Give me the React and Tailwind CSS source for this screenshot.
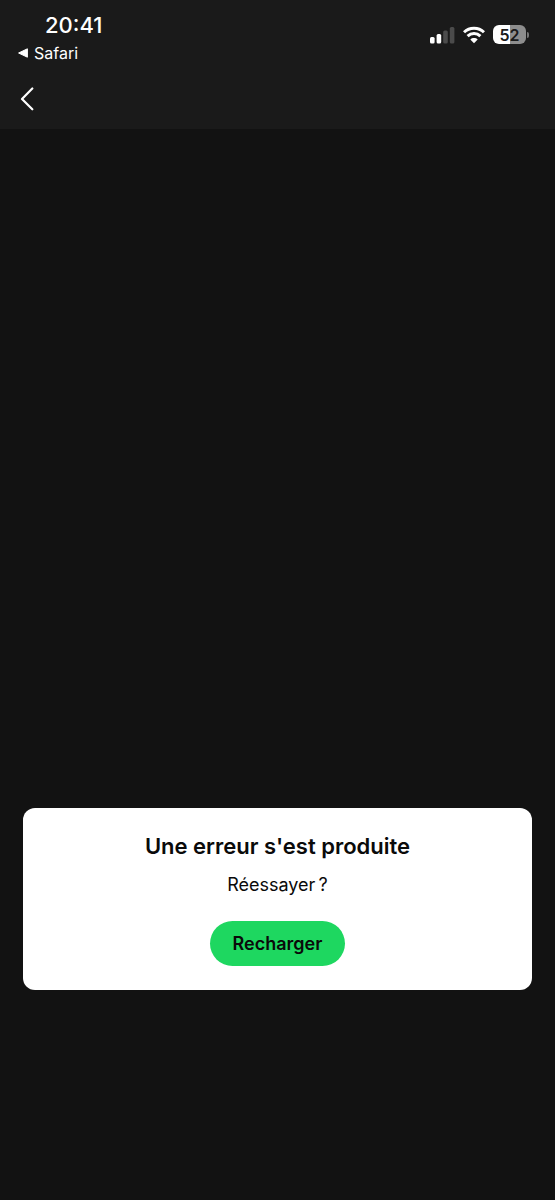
function BackArrow() {
  return (
    <svg width="14" height="24" viewBox="0 0 14 24" fill="none" stroke="#fff" strokeWidth="2.2" strokeLinecap="round" strokeLinejoin="round" aria-hidden="true">
      <path d="M12.3 1.5 2 12l10.3 10.3" />
    </svg>
  );
}

function Signal() {
  return (
    <svg width="25" height="18" viewBox="0 0 25 18" aria-hidden="true">
      <rect x="0" y="11" width="4.6" height="6.4" rx="1.5" fill="#fff" />
      <rect x="6.6" y="8" width="4.6" height="9.4" rx="1.5" fill="#fff" />
      <rect x="13.2" y="4.5" width="4.6" height="12.9" rx="1.5" fill="#4b4b4b" />
      <rect x="19.8" y="1" width="4.6" height="16.4" rx="1.5" fill="#4b4b4b" />
    </svg>
  );
}

function Wifi() {
  return (
    <svg width="22" height="18" viewBox="0 0 22 18" aria-hidden="true">
      <g fill="none" stroke="#fff" strokeWidth="3">
        <path d="M1 6.3C6.5 .9 15.5 .9 21 6.3" />
        <path d="M4.6 10.2C8.2 6.7 13.8 6.7 17.4 10.2" />
      </g>
      <path d="M7.3 13.4C9.4 11.5 12.6 11.5 14.7 13.4L11 17.2Z" fill="#fff" />
    </svg>
  );
}

function Battery() {
  return (
    <div className="flex items-center gap-px" role="img" aria-label="52 %">
      <span className="flex h-[19px] w-[33px] items-center justify-center rounded-md bg-linear-to-r from-white from-52% to-[#8d8d8d] to-52% text-base leading-none font-semibold text-[#1a1a1a]">
        52
      </span>
      <span className="h-[6px] w-[2px] rounded-r-full bg-[#777777]" />
    </div>
  );
}

export default function App() {
  return (
    <div className="flex min-h-screen flex-col bg-[#121212] font-['Inter',sans-serif] text-white">
      <header className="bg-[#1a1a1a] pb-[18px]">
        <div className="flex items-start justify-between pt-3 pr-[26px] pl-[18px]">
          <div>
            <time className="block pl-[27px] text-[22px] leading-[26px] font-medium">20:41</time>
            <a href="#safari" className="mt-[5px] flex items-center gap-[6px] text-base leading-5">
              <svg width="10" height="10" viewBox="0 0 10 10" fill="#fff" stroke="#fff" strokeLinejoin="round" aria-hidden="true">
                <path d="M.6 5 9.4 .8v8.4Z" />
              </svg>
              Safari
            </a>
          </div>
          <div className="flex items-center gap-2 pt-[13px]">
            <Signal />
            <Wifi />
            <Battery />
          </div>
        </div>
        <button type="button" aria-label="Retour" className="mt-6 ml-5 block">
          <BackArrow />
        </button>
      </header>
      <main className="flex flex-1 flex-col justify-end px-[23px] pb-[210px]">
        <section className="flex flex-col items-center rounded-xl bg-white px-6 pt-[23px] pb-6 text-[#0a0a0a]">
          <h1 className="text-center text-[22px] leading-[30px] font-semibold">Une erreur s'est produite</h1>
          <p className="mt-3 text-lg leading-6">{"Réessayer\u202f?"}</p>
          <button type="button" className="mt-6 rounded-full bg-[#1ed760] px-[23px] py-[10px] text-lg leading-[25px] font-semibold text-[#0a0a0a]">
            Recharger
          </button>
        </section>
      </main>
    </div>
  );
}
